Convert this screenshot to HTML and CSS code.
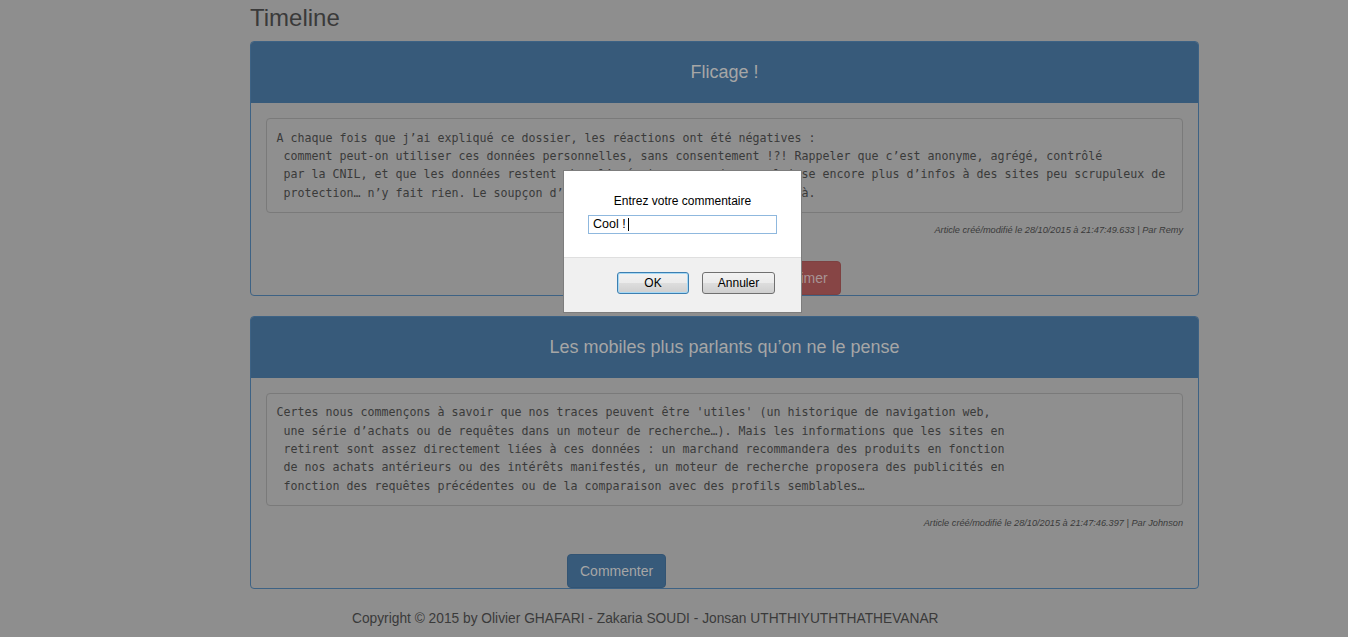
FILE: index.html
```html
<!DOCTYPE html>
<html lang="fr">
<head>
<meta charset="utf-8">
<title>Timeline</title>
<link rel="stylesheet" href="styles.css">
</head>
<body>
<div class="page">
  <h1 class="title">Timeline</h1>

  <div class="panel">
    <div class="panel-heading">Flicage !</div>
    <div class="panel-body">
<pre class="article">A chaque fois que j’ai expliqué ce dossier, les réactions ont été négatives :
 comment peut-on utiliser ces données personnelles, sans consentement !?! Rappeler que c’est anonyme, agrégé, contrôlé
 par la CNIL, et que les données restent chez l’opérateur, quand on en laisse encore plus d’infos à des sites peu scrupuleux de
 protection… n’y fait rien. Le soupçon d’espionnage constant est toujours là.</pre>
      <div class="meta">Article créé/modifié le 28/10/2015 à 21:47:49.633 | Par Remy</div>
      <div class="actions">
        <button class="btn btn-primary">Commenter</button>
        <button class="btn btn-danger">Supprimer</button>
      </div>
    </div>
  </div>

  <div class="panel">
    <div class="panel-heading">Les mobiles plus parlants qu’on ne le pense</div>
    <div class="panel-body">
<pre class="article">Certes nous commençons à savoir que nos traces peuvent être 'utiles' (un historique de navigation web,
 une série d’achats ou de requêtes dans un moteur de recherche…). Mais les informations que les sites en
 retirent sont assez directement liées à ces données : un marchand recommandera des produits en fonction
 de nos achats antérieurs ou des intérêts manifestés, un moteur de recherche proposera des publicités en
 fonction des requêtes précédentes ou de la comparaison avec des profils semblables…</pre>
      <div class="meta">Article créé/modifié le 28/10/2015 à 21:47:46.397 | Par Johnson</div>
      <div class="actions">
        <button class="btn btn-primary">Commenter</button>
      </div>
    </div>
  </div>

  <footer class="footer">Copyright © 2015 by Olivier GHAFARI - Zakaria SOUDI - Jonsan UTHTHIYUTHTHATHEVANAR</footer>
</div>

<div class="dialog">
  <div class="dialog-body">
    <div class="dialog-label">Entrez votre commentaire</div>
    <div class="dialog-input"><span>Cool !</span><span class="caret"></span></div>
  </div>
  <div class="dialog-footer">
    <button class="dbtn dbtn-focus">OK</button>
    <button class="dbtn">Annuler</button>
  </div>
</div>
</body>
</html>
```

FILE: styles.css
```css
html, body {
  margin: 0;
  padding: 0;
}

body {
  background: #8e8e8e;
  font-family: "Liberation Sans", Arial, sans-serif;
  color: #3a3a3a;
  height: 637px;
  overflow: hidden;
}

.page {
  margin-left: 250px;
  width: 949px;
}

.title {
  margin: 5px 0 10px;
  font-size: 24px;
  line-height: 26px;
  font-weight: normal;
  color: #3a3a3a;
}

.panel {
  border: 1px solid #3d6284;
  border-radius: 4px;
  margin-bottom: 20px;
}

.panel-heading {
  background: #375a7a;
  color: #a6a6a6;
  text-align: center;
  font-size: 18px;
  line-height: 21px;
  padding: 20px 15px;
  border-radius: 3px 3px 0 0;
}

.panel-body {
  padding: 15px 15px 0;
}

.article {
  margin: 0;
  padding: 9.5px;
  border: 1px solid #7a7a7a;
  border-radius: 4px;
  background: #8f8f8f;
  color: #3a3a3a;
  font-family: "DejaVu Sans Mono", "Liberation Mono", monospace;
  font-size: 11.63px;
  line-height: 18.4px;
  white-space: pre;
  overflow: hidden;
}

.meta {
  margin-top: 10px;
  text-align: right;
  font-style: italic;
  font-size: 9.2px;
  line-height: 14px;
  color: #3a3a3a;
}

.actions {
  display: flex;
  margin-top: 24px;
  padding-left: 301px;
}

.btn {
  height: 34px;
  padding: 6px 12px;
  font-family: "Liberation Sans", Arial, sans-serif;
  font-size: 14px;
  line-height: 20px;
  border: 1px solid transparent;
  border-radius: 4px;
  cursor: pointer;
}

.btn-primary {
  background: #375a7a;
  border-color: #335473;
  color: #a6a6a6;
}

.btn-danger {
  margin-left: 84px;
  background: #874545;
  border-color: #7e4141;
  color: #a89494;
}

.footer {
  margin-left: 102px;
  font-size: 13.75px;
  line-height: 20px;
  color: #3a3a3a;
}

/* prompt dialog */
.dialog {
  position: fixed;
  left: 563px;
  top: 170px;
  width: 237px;
  border: 1px solid #7d7d7d;
  background: #f0f0f0;
  font-family: "Liberation Sans", Arial, sans-serif;
  color: #000;
}

.dialog-body {
  background: #fff;
  padding: 23px 24px 23px;
}

.dialog-label {
  text-align: center;
  font-size: 12px;
  line-height: 14px;
  margin-bottom: 7px;
}

.dialog-input {
  display: flex;
  align-items: center;
  height: 17px;
  border: 1px solid #8fb8de;
  padding: 0 4px;
  font-size: 12.5px;
  line-height: 17px;
  background: #fff;
}

.caret {
  display: inline-block;
  width: 1px;
  height: 13px;
  background: #000;
  margin-left: 2px;
}

.dialog-footer {
  display: flex;
  justify-content: flex-end;
  gap: 13px;
  border-top: 1px solid #dfdfdf;
  padding: 14px 26px 18px 0;
}

.dbtn {
  width: 73px;
  height: 22px;
  padding: 0;
  border: 1px solid #707070;
  border-radius: 3px;
  background: linear-gradient(#f2f2f2 0%, #ebebeb 50%, #dddddd 51%, #cfcfcf 100%);
  font-family: "Liberation Sans", Arial, sans-serif;
  font-size: 12px;
  color: #000;
}

.dbtn-focus {
  width: 72px;
  border-color: #3c7fb1;
  box-shadow: inset 0 0 0 1px #a6d8f4;
}
```
